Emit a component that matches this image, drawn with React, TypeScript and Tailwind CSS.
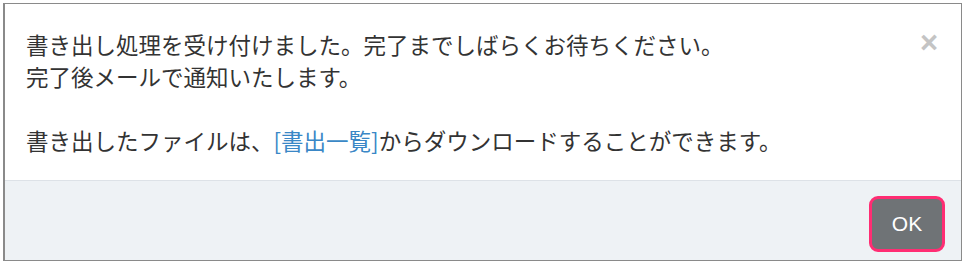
import React from 'react';

const App: React.FC = () => {
  return (
    <div className="w-[972px] h-[273px] bg-white pt-[3px] pl-[3px]">
      <div
        className="w-[959px] h-[258px] border border-[#8a8a8a] border-l-2 flex flex-col bg-white"
        style={{ fontFamily: '"Noto Sans CJK JP", "Noto Sans", sans-serif' }}
      >
        {/* Body */}
        <div className="relative flex-1 pl-[21px] pr-[60px] pt-[24px] text-[22.5px] leading-[32px] text-[#333]">
          <button
            className="absolute right-[23px] top-[23px] text-[31px] leading-none font-bold text-[#c4c4c4]"
            style={{ fontFamily: '"Liberation Sans", Arial, sans-serif' }}
          >
            ×
          </button>
          <p>書き出し処理を受け付けました。完了までしばらくお待ちください。</p>
          <p>完了後メールで通知いたします。</p>
          <p>&nbsp;</p>
          <p>
            書き出したファイルは、<a className="text-[#3a87c6]">[書出一覧]</a>からダウンロードすることができます。
          </p>
        </div>

        {/* Footer */}
        <div className="h-[80px] border-t border-[#dde2e7] bg-[#eef2f5] flex justify-end items-start pt-[15px] pr-[16px]">
          <button
            className="w-[76px] h-[56px] rounded-[9px] border-[3px] border-[#ff2d73] bg-[#6f7376] text-white text-[21px]"
            style={{ fontFamily: '"Liberation Sans", Arial, sans-serif' }}
          >
            OK
          </button>
        </div>
      </div>
    </div>
  );
};

export default App;
